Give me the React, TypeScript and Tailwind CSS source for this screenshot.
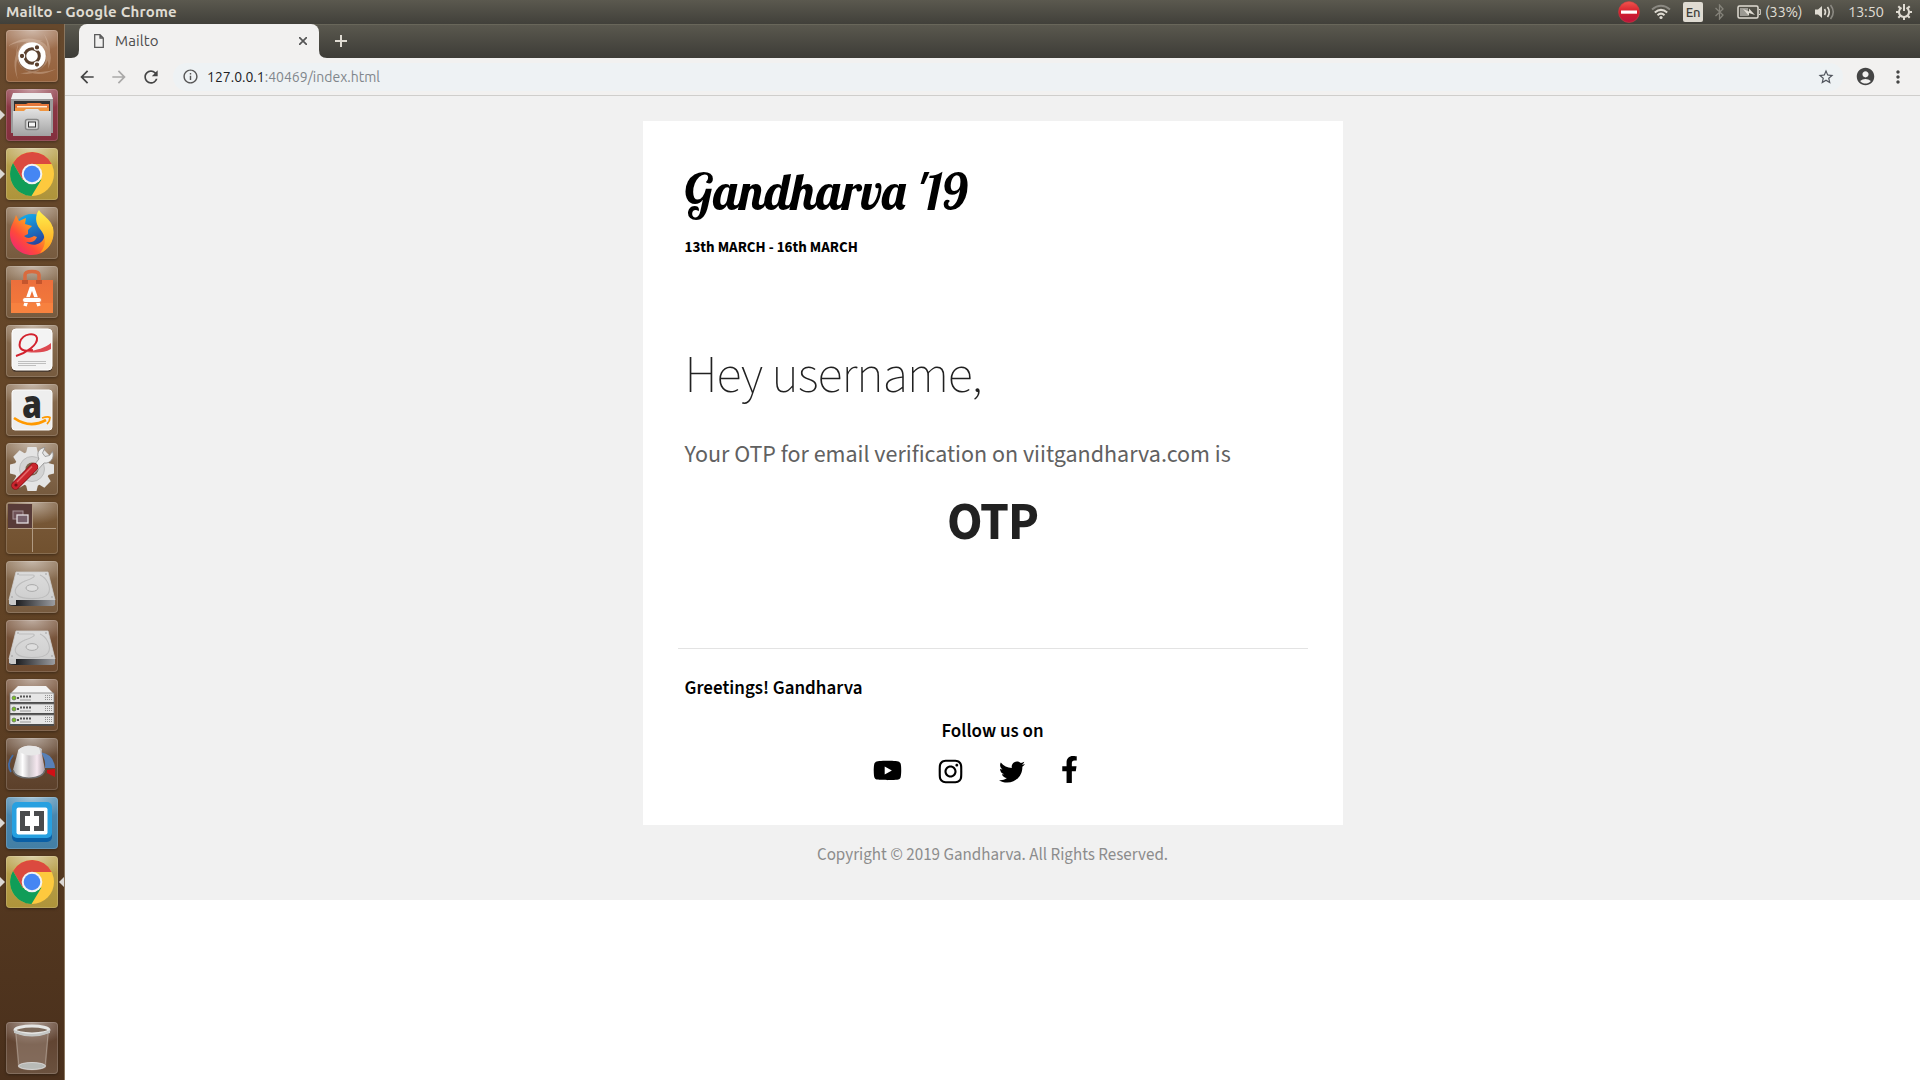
import type { ReactNode } from 'react';
import { FaYoutube, FaInstagram, FaTwitter, FaFacebookF } from 'react-icons/fa';
import { MdArrowBack, MdArrowForward, MdRefresh, MdStarBorder, MdAccountCircle, MdMoreVert, MdInfoOutline } from 'react-icons/md';

type TileProps = { tint?: string; running?: boolean; focused?: boolean; children: ReactNode };

function Tile({ tint = 'from-[#8c7054] to-[#765a3e]', running, focused, children }: TileProps) {
  return (
    <div className="relative flex h-[52px] w-full shrink-0 justify-center">
      {running && (
        <svg className="absolute top-[20px] left-0" width="5" height="12" viewBox="0 0 5 12">
          <path d="M0 1L5 6L0 11Z" fill="#dcd8d4" />
        </svg>
      )}
      <div className={`h-[52px] w-[52px] rounded-[4px] bg-linear-to-b shadow-[inset_0_0_0_1px_rgba(255,255,255,0.16),0_1px_3px_rgba(0,0,0,0.35)] ${tint}`}>
        <svg className="overflow-visible" width="52" height="52" viewBox="0 0 52 52">
          <rect width="52" height="30" rx="4" fill="url(#gloss)" />
          {children}
        </svg>
      </div>
      {focused && (
        <svg className="absolute top-[20px] right-0" width="5" height="12" viewBox="0 0 5 12">
          <path d="M5 1L0 6L5 11Z" fill="#dcd8d4" />
        </svg>
      )}
    </div>
  );
}

function Defs() {
  return (
    <svg width="0" height="0" className="absolute">
      <defs>
        <radialGradient id="gloss" cx="0.5" cy="0" r="0.75">
          <stop offset="0" stopColor="#fff" stopOpacity="0.5" />
          <stop offset="1" stopColor="#fff" stopOpacity="0" />
        </radialGradient>
        <linearGradient id="metal" x1="0" y1="0" x2="0" y2="1">
          <stop offset="0" stopColor="#e2e2e2" />
          <stop offset="1" stopColor="#a2a2a2" />
        </linearGradient>
        <linearGradient id="plate" x1="0" y1="0" x2="0" y2="1">
          <stop offset="0" stopColor="#dcdcdc" />
          <stop offset="1" stopColor="#cfcfcf" />
        </linearGradient>
        <linearGradient id="knob" x1="0" y1="0" x2="1" y2="0">
          <stop offset="0" stopColor="#a9a9a9" />
          <stop offset="0.3" stopColor="#ffffff" />
          <stop offset="0.5" stopColor="#c9c5c8" />
          <stop offset="0.75" stopColor="#f6e8f0" />
          <stop offset="1" stopColor="#a99ca4" />
        </linearGradient>
        <linearGradient id="bag" x1="0" y1="0" x2="0" y2="1">
          <stop offset="0" stopColor="#ec6f3c" />
          <stop offset="1" stopColor="#f47b3a" />
        </linearGradient>
        <linearGradient id="fox" x1="1" y1="0" x2="0" y2="1">
          <stop offset="0" stopColor="#fff04a" />
          <stop offset="0.35" stopColor="#ffa51e" />
          <stop offset="0.65" stopColor="#ff4a3a" />
          <stop offset="1" stopColor="#e8178a" />
        </linearGradient>
        <linearGradient id="flame" x1="0" y1="0" x2="0" y2="1">
          <stop offset="0" stopColor="#fff24c" />
          <stop offset="1" stopColor="#ff9a1c" />
        </linearGradient>
        <linearGradient id="globe" x1="0.2" y1="0" x2="0.6" y2="1">
          <stop offset="0" stopColor="#12b0ee" />
          <stop offset="1" stopColor="#2a2f8f" />
        </linearGradient>
        <linearGradient id="drive" x1="0" y1="0" x2="1" y2="0">
          <stop offset="0" stopColor="#4a4c50" />
          <stop offset="0.15" stopColor="#1c1d20" />
          <stop offset="1" stopColor="#9b9da1" />
        </linearGradient>
        <linearGradient id="stop" x1="0" y1="0" x2="0" y2="1">
          <stop offset="0" stopColor="#f0564e" />
          <stop offset="0.5" stopColor="#d51d2b" />
          <stop offset="1" stopColor="#b8143c" />
        </linearGradient>
      </defs>
    </svg>
  );
}

function Ubuntu() {
  return (
    <>
      <g fill="#f1dccb" opacity=".3">
        <path d="M2 16Q22 2 39 14Q49 25 42 39Q44 24 33 15Q20 8 2 16Z" />
        <path d="M38 4Q49 20 40 34Q29 47 14 43Q30 44 38 32Q45 18 38 4Z" />
        <path d="M12 50Q4 31 14 17Q24 7 37 11Q24 9 16 19Q7 32 12 50Z" />
        <path d="M50 39Q30 50 15 37Q7 27 12 14Q9 28 18 37Q31 46 50 39Z" />
      </g>
      <circle cx="26" cy="27.500" r="14" fill="#5b3d2a" opacity=".4" />
      <circle cx="26" cy="26" r="13.800" fill="#fff" />
      <circle cx="26" cy="26" r="7.300" fill="none" stroke="#5a402e" strokeWidth="3" />
      <g fill="#5a402e" stroke="#fff" strokeWidth="1.100">
        <circle cx="16" cy="26" r="2.700" />
        <circle cx="31" cy="17.400" r="2.700" />
        <circle cx="31" cy="34.600" r="2.700" />
      </g>
    </>
  );
}

function Files() {
  return (
    <>
      <path d="M7 5H45L47 11V44H5V11Z" fill="#9c9c9c" />
      <path d="M7 4H45L47 10H5Z" fill="#efefef" />
      <path d="M8 12H44V23H8Z" fill="#303030" />
      <path d="M9 15H20L22 14H34L36 15H43V23H9Z" fill="#e6773a" />
      <path d="M11 17H41V18.500H11Z" fill="#fff0d6" />
      <path d="M9 19H43V23H9Z" fill="#f0953f" />
      <path d="M7 22H18L20 20H32L34 22H45V47H7Z" fill="url(#metal)" />
      <rect x="19.500" y="30.500" width="13" height="10" rx="2" fill="#ddd" stroke="#858585" strokeWidth="1.500" />
      <rect x="22.500" y="33" width="7" height="5" fill="#f4f4f4" stroke="#333" />
    </>
  );
}

function Chrome() {
  return (
    <>
      <circle cx="26" cy="26" r="22" fill="#fdc93e" />
      <path d="M26 26L26 16H45.700A22 22 0 0 0 7 15L16.500 31.500Z" fill="#db4a3f" />
      <path d="M7 15A22 22 0 0 0 25.500 48L35.500 31.500L26 36L16.500 31.500Z" fill="#109d58" />
      <circle cx="26" cy="26" r="10.300" fill="#f3f3f3" />
      <circle cx="26" cy="26" r="8.300" fill="#4586f3" />
    </>
  );
}

function Firefox() {
  return (
    <>
      <circle cx="26" cy="26" r="19" fill="url(#globe)" />
      <path d="M10 8L13 14L20 11L19 17L26 19L22 23V27L18 29C21 32 25 31 28 29L31 30C29 35 24 36 20 35C26 40 35 38 38 31C41 24 37 19 33 15L47 20C49 36 40 48 26 48C13 48 4 38 4 27C4 19 8 15 10 8Z" fill="url(#fox)" />
      <path d="M33 3C37 10 47 12 47.500 25C48 35 42 43 34 46C41 38 40 29 34 22C29 16 29 8 33 3Z" fill="url(#flame)" />
    </>
  );
}

function Software() {
  return (
    <>
      <path d="M5 14H47V47H5Z" fill="url(#bag)" />
      <path d="M5 37H47V47H5Z" fill="#fb8a43" opacity=".5" />
      <path d="M19 17V9Q19 5.500 26 5.500Q33 5.500 33 9V17" fill="none" stroke="#d96b3f" strokeWidth="3.500" />
      <path d="M16 14H22V18H16ZM30 14H36V18H30Z" fill="#c4552d" />
      <path d="M19 40L25 22.500H27L33 40" fill="none" stroke="#fff" strokeWidth="3.500" />
      <rect x="16.500" y="31.500" width="19" height="5" rx="2.500" fill="#fff" stroke="#e76f35" strokeWidth=".8" />
    </>
  );
}

function Reader() {
  return (
    <>
      <rect x="6" y="6" width="40" height="41" rx="4" fill="#4d3d30" />
      <rect x="6" y="4" width="40" height="41" rx="4" fill="#f3f3f3" stroke="#fff" />
      <path d="M10 31C20 28 32 20 31 13C30 7 17 8 14 17C12 25 18 27 27 25" fill="none" stroke="#d3222e" strokeWidth="2" />
      <path d="M20 27C31 25 39 23 45 18V24C38 28 31 28 20 27Z" fill="#dd4a51" />
      <path d="M12 36.500H40M12 38.500H40M12 40.500H30" stroke="#b9b9b9" strokeWidth=".9" />
    </>
  );
}

function Amazon() {
  return (
    <>
      <rect x="6" y="6" width="40" height="40" rx="3" fill="#eee" stroke="#fafafa" />
      <text x="26" y="33.500" textAnchor="middle" fontFamily="Open Sans, sans-serif" fontWeight="800" fontSize="38" fill="#2a2a2a" textLength="20" lengthAdjust="spacingAndGlyphs">a</text>
      <path d="M8 34Q24 45 40 36" fill="none" stroke="#f90" strokeWidth="2.700" />
      <path d="M36 34Q42 32 44 33.500Q44 37 41 40" fill="none" stroke="#f90" strokeWidth="1.800" />
    </>
  );
}

function Settings() {
  return (
    <>
      <g fill="#e4e4e4">
        <circle cx="26" cy="26" r="17.500" />
        {[0, 45, 90, 135, 180, 225, 270, 315].map((a) => (
          <path key={a} d="M20 10L21.500 4H30.500L32 10Z" transform={`rotate(${a} 26 26)`} />
        ))}
      </g>
      <circle cx="26" cy="26" r="12.500" fill="#d3d3d3" stroke="#bcbcbc" />
      <circle cx="26" cy="26" r="6.500" fill="#7b6149" />
      <path d="M24 27L33 16C30 10 33 5 39 4.500L36.500 10L39 13.500L43.500 12.500L46.500 8.500C49 15 44 21 38 20L28 31Z" fill="#ececec" stroke="#8e8e8e" strokeWidth=".8" />
      <path d="M9.500 42.500L28 24" stroke="#84141a" strokeWidth="8.500" strokeLinecap="round" />
      <path d="M9.500 42.500L28 24" stroke="#c9252d" strokeWidth="7" strokeLinecap="round" />
      <path d="M11 39L26 23.500" stroke="#e56a6c" strokeWidth="1.500" />
      <circle cx="10" cy="42" r="1.600" fill="#701317" />
    </>
  );
}

function Workspaces() {
  return (
    <>
      <path d="M2 2H26V26H2Z" fill="#583b38" />
      <path d="M26.500 2V50M2 26.500H50" stroke="#b09a82" strokeWidth="1" />
      <rect x="7" y="9" width="10" height="8" fill="#6f5257" stroke="#a69396" />
      <rect x="11" y="13" width="11" height="8" fill="#77616b" stroke="#e4dde0" strokeWidth="1.300" />
    </>
  );
}

function Disk() {
  return (
    <>
      <path d="M10 11H42L49 39H3Z" fill="url(#plate)" stroke="#cfcfcf" strokeWidth=".8" />
      <path d="M3 39H49V44L47 45H5L3 44Z" fill="url(#drive)" />
      <path d="M3 39H10V44H5L3 43Z" fill="#c9c9c9" />
      <path d="M13 14H27C31 15 25 18 19 20C10 24 7 30 11 34C16 39 38 39 42 33C46 27 41 17 34 14" fill="none" stroke="#bdbdbd" strokeWidth="1.100" />
      <ellipse cx="26" cy="27" rx="6" ry="3.400" fill="#dedede" stroke="#aaa" />
      <circle cx="12" cy="13" r=".8" fill="#999" />
      <circle cx="40" cy="13" r=".8" fill="#999" />
      <circle cx="6" cy="36" r=".8" fill="#999" />
      <circle cx="46" cy="36" r=".8" fill="#999" />
    </>
  );
}

function Server() {
  return (
    <>
      <path d="M12 7H40L47 14H5Z" fill="#f3f3f3" />
      {[14, 25, 36].map((y) => (
        <g key={y}>
          <rect x="4" y={y} width="44" height="10" fill="#e6e6e6" stroke="#7b7b7b" strokeWidth=".8" />
          <rect x="4" y={y + 9} width="44" height="2" fill="#4c4c4c" />
          <circle cx="8" cy={y + 5} r="2" fill="#79c41e" stroke="#69706a" strokeWidth=".8" />
          <rect x="11" y={y + 4} width="2" height="2" fill="#555" />
          <path d={`M14 ${y + 3.5}H25`} stroke="#555" strokeWidth="2" strokeDasharray="2 1" />
          <path d={`M14 ${y + 7}H25`} stroke="#999" />
          <path d={`M39 ${y + 2.5}H46M39 ${y + 4.5}H46M39 ${y + 6.5}H46`} stroke="#888" strokeWidth=".9" strokeDasharray="1 1" />
        </g>
      ))}
    </>
  );
}

function Knob() {
  return (
    <>
      <path d="M5 34Q0 26 7 17" fill="none" stroke="#426ca7" strokeWidth="1.800" />
      <path d="M34 14Q48 16 49 30L39 30Q40 20 34 14Z" fill="#5780b8" />
      <path d="M41 32L49 31V39L41 35Z" fill="#cf1016" />
      <path d="M12 13C16 6 30 7 35 11L39 32Q37 40 23 40Q9 40 7 32Z" fill="url(#knob)" />
      <path d="M12 13C16 6 30 7 35 11L34 16Q22 20 12 13Z" fill="#e8e8e8" />
      <path d="M33 9.500L36 11L35 16Z" fill="#c8c8c8" />
      <path d="M7 32Q9 40 23 40Q37 40 39 32" fill="none" stroke="#6c6c6c" strokeWidth="1.200" />
    </>
  );
}

function Brackets() {
  return (
    <>
      <rect x="6" y="8" width="40" height="37" rx="5" fill="#0a5fa5" />
      <rect x="6" y="5" width="40" height="36" rx="5" fill="#27a0e0" />
      <rect x="10.500" y="10.500" width="31" height="27" rx="2" fill="#fff" />
      <path d="M14 14H24V19H19V29H24V34H14Z" fill="#4a4b4d" />
      <path d="M38 14H28V19H33V29H28V34H38Z" fill="#4a4b4d" />
    </>
  );
}

function Trash() {
  return (
    <>
      <path d="M9 10L12 46Q26 51 40 46L43 10Z" fill="#a39182" opacity=".45" />
      <path d="M10 12L13 45M42 12L39 45" stroke="#c9bcb1" strokeWidth=".8" opacity=".6" />
      <ellipse cx="26" cy="44" rx="13.500" ry="3.500" fill="#b8bab6" stroke="#e3e3e3" strokeWidth=".8" />
      <ellipse cx="26" cy="8" rx="17" ry="4" fill="#7d6a5b" stroke="#e6e6e4" strokeWidth="3" />
      <path d="M8 8Q26 16 44 8V11Q26 18 8 11Z" fill="#c5c7c5" />
    </>
  );
}

function Launcher() {
  const chromeTint = 'from-[#baa24e] to-[#ae943a]';
  const darkTint = 'from-[#7c583f] to-[#6c4a2f]';
  return (
    <aside className="flex w-[65px] shrink-0 flex-col justify-between border-r border-[#8a765f] bg-linear-to-b from-[#66482c] via-[#644526] to-[#4a301c] pt-[6px] pb-[6px]">
      <div className="flex flex-col gap-[7px]">
        <Tile tint="from-[#a07253] to-[#94603a]"><Ubuntu /></Tile>
        <Tile tint="from-[#8f3c48] to-[#832f3d]" running><Files /></Tile>
        <Tile tint={chromeTint} running><Chrome /></Tile>
        <Tile><Firefox /></Tile>
        <Tile><Software /></Tile>
        <Tile><Reader /></Tile>
        <Tile><Amazon /></Tile>
        <Tile><Settings /></Tile>
        <Tile tint="from-[#7a5a3a] to-[#71512f]"><Workspaces /></Tile>
        <Tile><Disk /></Tile>
        <Tile tint={darkTint}><Disk /></Tile>
        <Tile tint={darkTint}><Server /></Tile>
        <Tile tint="from-[#6c503b] to-[#5c402a]"><Knob /></Tile>
        <Tile tint="from-[#4c8bb2] to-[#437fa5]" running><Brackets /></Tile>
        <Tile tint={chromeTint} running focused><Chrome /></Tile>
      </div>
      <Tile tint="from-[#5c3d2b] to-[#6b523f]"><Trash /></Tile>
    </aside>
  );
}

function TopPanel() {
  return (
    <header className="flex h-6 shrink-0 items-center justify-between bg-linear-to-b from-[#5b594f] to-[#41403a] pr-2 pl-[6px] font-['Ubuntu','Noto_Sans',sans-serif] text-[#dfdbd2]">
      <span className="text-[15px] leading-6 font-bold tracking-[0.2px]">Mailto - Google Chrome</span>
      <div className="flex items-center">
        <svg width="22" height="22" viewBox="0 0 22 22">
          <circle cx="11" cy="11" r="10.500" fill="url(#stop)" stroke="#c94043" strokeWidth=".6" />
          <rect x="3" y="9.500" width="16" height="3.200" fill="#fff" />
        </svg>
        <svg className="ml-[11px]" width="20" height="16" viewBox="0 0 20 16" fill="none" strokeWidth="2">
          <path d="M1 5.500Q10 -2 19 5.500" stroke="#8b8982" />
          <path d="M3.800 8.500Q10 3.200 16.200 8.500" stroke="#dfdbd2" />
          <path d="M6.500 11.200Q10 8 13.500 11.200" stroke="#dfdbd2" />
          <circle cx="10" cy="13.500" r="1.600" fill="#dfdbd2" />
        </svg>
        <span className="ml-3 flex h-5 w-5 items-center justify-center rounded-[2px] bg-[#dfdbd2] pt-px text-[13px] font-medium tracking-[-0.3px] text-[#3f3e39]">En</span>
        <svg className="ml-3" width="9" height="16" viewBox="0 0 9 16" fill="none" stroke="#85837a" strokeWidth="1.300">
          <path d="M.5 4L8 11L4.500 15V1L8 5L.5 12" />
        </svg>
        <svg className="ml-[13px]" width="24" height="14" viewBox="0 0 24 14">
          <rect x="1" y="1" width="20" height="12" rx="1.500" fill="none" stroke="#dfdbd2" strokeWidth="1.500" />
          <path d="M22 4.500H23.300V9.500H22" fill="none" stroke="#dfdbd2" />
          <rect x="3" y="3" width="8" height="8" fill="#9b9992" />
          <path d="M6 4L12 6.500V3.500L18 10L12 8V11Z" fill="#dfdbd2" />
        </svg>
        <span className="ml-[4px] w-[38px] text-[15px] leading-6 tracking-[-0.4px]">(33%)</span>
        <svg className="ml-[12px]" width="20" height="16" viewBox="0 0 20 16" fill="none" strokeWidth="1.600">
          <path d="M0 5.500H3L7 2V14L3 10.500H0Z" fill="#dfdbd2" />
          <path d="M9.500 5Q11.500 8 9.500 11M12.500 3Q16 8 12.500 13" stroke="#dfdbd2" />
          <path d="M15.500 1Q21 8 15.500 15" stroke="#8b8982" />
        </svg>
        <span className="ml-[13px] w-[36px] text-[15px] leading-6 tracking-[-0.4px]">13:50</span>
        <svg className="ml-3" width="16" height="16" viewBox="0 0 16 16" fill="none" stroke="#dfdbd2" strokeWidth="2">
          <path d="M5.500 3.700A5 5 0 1 0 10.500 3.700" />
          <path d="M8 0V7" />
          <path d="M2.300 2.300L4.300 4.300M0 8H3M2.300 13.700L4.300 11.700M8 16V13M13.700 13.700L11.700 11.700M16 8H13M13.700 2.300L11.700 4.300" />
        </svg>
      </div>
    </header>
  );
}

function TabStrip() {
  return (
    <div className="flex h-[34px] shrink-0 items-end bg-linear-to-b from-[#5b594f] to-[#3d3c37] font-['Ubuntu','Noto_Sans',sans-serif] shadow-[inset_0_1px_0_#68665a]">
      <svg width="14" height="34" viewBox="0 0 14 34"><path d="M6 34Q14 34 14 26V34Z" fill="#f2f1f0" /></svg>
      <div className="flex h-[34px] w-[240px] items-center rounded-t-[8px] bg-[#f2f1f0] pr-3 pl-[15px]">
        <svg width="10" height="14" viewBox="0 0 10 14" fill="none" stroke="#5a5a5a" strokeWidth="1.300">
          <path d="M.7.700H6L9.300 4V13.300H.7ZM6 .7V4H9.300" />
        </svg>
        <span className="ml-[11px] flex-1 text-[15px] leading-[34px] tracking-[0.1px] text-[#4c4c4c]">Mailto</span>
        <svg width="8" height="8" viewBox="0 0 8 8" stroke="#555" strokeWidth="1.700"><path d="M0 0L8 8M8 0L0 8" /></svg>
      </div>
      <svg width="8" height="34" viewBox="0 0 8 34"><path d="M8 34Q0 34 0 26V34Z" fill="#f2f1f0" /></svg>
      <svg className="mb-[11px] ml-2" width="12" height="12" viewBox="0 0 12 12" stroke="#dfdbd2" strokeWidth="2"><path d="M6 0V12M0 6H12" /></svg>
    </div>
  );
}

function Toolbar() {
  return (
    <div className="flex h-[38px] shrink-0 items-center border-b border-[#cfcecc] bg-[#f2f1f0] font-['Ubuntu','Noto_Sans',sans-serif]">
      <MdArrowBack className="ml-[12px] text-[#454545]" size={20} />
      <MdArrowForward className="ml-[12px] text-[#aaa9a8]" size={20} />
      <MdRefresh className="ml-[12px] text-[#454545]" size={20} />
      <div className="ml-[12px] flex h-7 flex-1 items-center rounded-full bg-[#eef2f4] pr-2 pl-[9px]">
        <MdInfoOutline className="text-[#555]" size={17} />
        <span className="ml-[8px] flex-1 pt-px text-[14px] text-[#80868b]">
          <span className="text-[#202124]">127.0.0.1</span>:40469/index.html
        </span>
        <MdStarBorder className="text-[#50545c]" size={18} />
      </div>
      <MdAccountCircle className="ml-[12px] text-[#454545]" size={21} />
      <MdMoreVert className="mr-[12px] ml-[12px] text-[#454545]" size={20} />
    </div>
  );
}

function Mail() {
  return (
    <main className="flex-1 bg-white font-['Source_Sans_3','Noto_Sans_CJK_SC',sans-serif]">
      <div className="flex h-[804px] flex-col items-center bg-[#f1f1f1] pt-[25px]">
        <article className="flex h-[704px] w-[700px] flex-col bg-white px-[35px] pt-[41px]">
          <div className="pl-[7px] text-black">
            <h1 className="h-[60px] font-['Lobster','Liberation_Serif',serif] text-[50px] leading-[60px] font-normal whitespace-nowrap">Gandharva '19</h1>
            <p className="mt-4 text-[15px] leading-5 font-bold">13th MARCH - 16th MARCH</p>
            <h2 className="mt-[88px] text-[52px] leading-[60px] font-extralight tracking-[-1px] whitespace-nowrap text-[#212121]">Hey username,</h2>
            <p className="mt-[34px] text-[24px] leading-[30px] whitespace-nowrap text-[#616161]">Your OTP for email verification on viitgandharva.com is</p>
          </div>
          <p className="mt-[23px] text-center text-[52px] leading-[60px] font-bold tracking-[-1px] text-[#212121]">OTP</p>
          <hr className="mt-[95px] border-[#e3e3e3]" />
          <p className="mt-[28px] pl-[7px] text-[19px] leading-6 font-semibold text-black">Greetings! Gandharva</p>
          <p className="mt-[19px] text-center text-[19px] leading-6 font-semibold text-black">Follow us on</p>
          <div className="mt-[12px] flex h-[27px] items-end pl-[195px] text-black">
            <FaYoutube className="mb-[-2px]" size={29} />
            <FaInstagram className="mb-[-2px] ml-[35px]" size={27} />
            <FaTwitter className="mb-[-2px] ml-[35px]" size={26} />
            <FaFacebookF className="ml-[31px]" size={27} />
          </div>
        </article>
        <p className="mt-[18px] text-[17px] leading-6 text-[#8c8c8c]">Copyright © 2019 Gandharva. All Rights Reserved.</p>
      </div>
    </main>
  );
}

export default function App() {
  return (
    <div className="flex h-screen w-screen flex-col overflow-hidden bg-white">
      <Defs />
      <TopPanel />
      <div className="flex min-h-0 flex-1">
        <Launcher />
        <div className="flex min-w-0 flex-1 flex-col">
          <TabStrip />
          <Toolbar />
          <Mail />
        </div>
      </div>
    </div>
  );
}
